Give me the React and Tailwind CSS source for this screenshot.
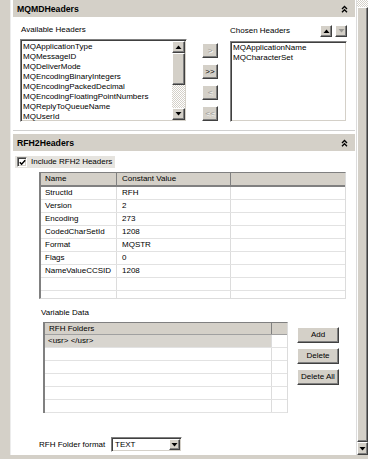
import React from "react";

const raised =
  "bg-[#d4d0c8] border border-t-white border-l-white border-r-[#404040] border-b-[#404040] shadow-[inset_-1px_-1px_0_#808080]";
const sunken =
  "bg-white border border-t-[#808080] border-l-[#808080] border-r-white border-b-white shadow-[inset_1px_1px_0_#404040,inset_-1px_-1px_0_#d4d0c8]";
const checker =
  "bg-[repeating-conic-gradient(#d4d0c8_0%_25%,#ffffff_0%_50%)] bg-[length:2px_2px]";

function Chevrons() {
  return (
    <svg width="7" height="8" viewBox="0 0 7 8">
      <polyline points="1,4 3.5,1.5 6,4" fill="none" stroke="#000" strokeWidth="1.3" />
      <polyline points="1,7.2 3.5,4.7 6,7.2" fill="none" stroke="#000" strokeWidth="1.3" />
    </svg>
  );
}

function Tri({ up, color = "#000" }) {
  return (
    <svg width="7" height="4" viewBox="0 0 7 4">
      <polygon points={up ? "0.5,4 3.5,0.5 6.5,4" : "0.5,0 3.5,3.5 6.5,0"} fill={color} />
    </svg>
  );
}

function SectionHeader({ title }) {
  return (
    <div className="h-[17px] bg-[#d4d0c8] flex items-center justify-between pl-[4px] pr-[7px]">
      <span className="text-[8.7px] font-bold text-black leading-[10px] whitespace-nowrap">{title}</span>
      <Chevrons />
    </div>
  );
}

function Btn({ children, disabled, className = "" }) {
  return (
    <div
      className={`${raised} flex items-center justify-center text-[8px] leading-[10px] whitespace-nowrap ${
        disabled ? "text-[#9a9894] [text-shadow:1px_1px_0_#ffffff]" : "text-black"
      } ${className}`}
    >
      {children}
    </div>
  );
}

const available = [
  "MQApplicationType",
  "MQMessageID",
  "MQDeliverMode",
  "MQEncodingBinaryIntegers",
  "MQEncodingPackedDecimal",
  "MQEncodingFloatingPointNumbers",
  "MQReplyToQueueName",
  "MQUserId",
];

const rows = [
  ["StructId", "RFH"],
  ["Version", "2"],
  ["Encoding", "273"],
  ["CodedCharSetId", "1208"],
  ["Format", "MQSTR"],
  ["Flags", "0"],
  ["NameValueCCSID", "1208"],
  ["", ""],
  ["", ""],
];

function MqmdBody() {
  return (
    <div className="h-[114px] border-b border-b-[#d0d0d0] flex items-start">
      <div className="ml-[7px] w-[167px] mt-[8px]">
        <div className="h-[10px] leading-[10px] text-[8px] pl-[1px] whitespace-nowrap">Available Headers</div>
        <div className={`${sunken} mt-[4px] h-[83px] flex p-[1px] overflow-hidden`}>
          <div className="flex-1 pl-[1px] pt-[1px]">
            {available.map((a) => (
              <div key={a} className="h-[10px] leading-[10px] text-[8px] whitespace-nowrap">
                {a}
              </div>
            ))}
          </div>
          <div className="w-[13px] flex flex-col">
            <div className={`${raised} h-[12px] flex items-center justify-center`}>
              <Tri up />
            </div>
            <div className={`${raised} h-[32px]`} />
            <div className={`${checker} flex-1`} />
            <div className={`${raised} h-[12px] flex items-center justify-center`}>
              <Tri />
            </div>
          </div>
        </div>
      </div>
      <div className="ml-[15px] w-[16px] mt-[26px] flex flex-col gap-[6px]">
        <Btn disabled className="h-[15px]">&gt;</Btn>
        <Btn className="h-[15px]">&gt;&gt;</Btn>
        <Btn disabled className="h-[15px]">&lt;</Btn>
        <Btn disabled className="h-[15px]">&lt;&lt;</Btn>
      </div>
      <div className="ml-[12px] w-[117px] mt-[8px]">
        <div className="h-[12px] flex items-center">
          <span className="text-[8px] leading-[10px] flex-1 whitespace-nowrap">Chosen Headers</span>
          <div className={`${raised} w-[12px] h-[12px] flex items-center justify-center`}>
            <Tri up />
          </div>
          <div className={`${raised} w-[12px] h-[12px] ml-[3px] flex items-center justify-center`}>
            <Tri color="#9a9894" />
          </div>
        </div>
        <div className={`${sunken} mt-[4px] h-[81px] pl-[2px] pt-[1px]`}>
          <div className="h-[10px] leading-[10px] text-[8px] whitespace-nowrap">MQApplicationName</div>
          <div className="h-[10px] leading-[10px] text-[8px] whitespace-nowrap">MQCharacterSet</div>
        </div>
      </div>
    </div>
  );
}

function RfhBody() {
  return (
    <div className="flex-1 flex flex-col">
      <div className="ml-[2px] mt-[5px] w-[100px] h-[12px] bg-[#e6e4df] flex items-center">
        <div className={`${sunken} ml-[2px] w-[10px] h-[10px] shrink-0 flex items-center justify-center`}>
          <svg width="7" height="7" viewBox="0 0 7 7">
            <polyline points="0.8,3.2 2.6,5.2 6.2,1.2" fill="none" stroke="#000" strokeWidth="1.5" />
          </svg>
        </div>
        <span className="ml-[4px] text-[8px] leading-[10px] whitespace-nowrap">Include RFH2 Headers</span>
      </div>

      <div className="ml-[26px] mt-[4px] w-[307px] h-[127px] overflow-hidden border-t border-t-[#808080] border-l-2 border-l-[#808080] border-r border-r-[#dcdcdc] border-b border-b-[#dcdcdc]">
        <div className="flex h-[14px] bg-[#d4d0c8] border-b-2 border-b-[#808080] text-[8px] leading-[10px]">
          <div className="w-[76px] pl-[4px] flex items-center border-r border-r-[#808080]">Name</div>
          <div className="w-[114px] pl-[5px] flex items-center border-r border-r-[#808080] whitespace-nowrap">Constant Value</div>
          <div className="flex-1" />
        </div>
        {rows.map((r, i) => (
          <div key={i} className="flex h-[13px] border-b border-b-[#e2e2e2] text-[8px] leading-[10px]">
            <div className="w-[76px] pl-[4px] flex items-center border-r border-r-[#dcdcdc] whitespace-nowrap">{r[0]}</div>
            <div className="w-[114px] pl-[5px] flex items-center border-r border-r-[#dcdcdc]">{r[1]}</div>
            <div className="flex-1" />
          </div>
        ))}
      </div>

      <div className="ml-[28px] mt-[9px] h-[10px] leading-[10px] text-[8px] whitespace-nowrap">Variable Data</div>

      <div className="flex items-start mt-[4px]">
        <div className="ml-[30px] w-[245px] h-[91px] overflow-hidden border-t border-t-[#808080] border-l-2 border-l-[#808080] border-r border-r-[#dcdcdc]">
          <div className="flex h-[12px] bg-[#d4d0c8] border-b border-b-[#a0a0a0] text-[8px] leading-[10px]">
            <div className="w-[227px] pl-[4px] flex items-center border-r border-r-[#808080]">RFH Folders</div>
            <div className="flex-1" />
          </div>
          {[0, 1, 2, 3, 4, 5].map((i) => (
            <div key={i} className="flex h-[13px] border-b border-b-[#e2e2e2] text-[8px] leading-[10px]">
              <div
                className={`w-[227px] pl-[3px] flex items-center border-r border-r-[#dcdcdc] whitespace-nowrap ${
                  i === 0 ? "bg-[#d8d5cf]" : ""
                }`}
              >
                {i === 0 ? "<usr> </usr>" : ""}
              </div>
              <div className="flex-1" />
            </div>
          ))}
        </div>
        <div className="ml-[9px] w-[42px] mt-[5px] flex flex-col gap-[5px]">
          <Btn className="h-[16px]">Add</Btn>
          <Btn className="h-[16px]">Delete</Btn>
          <Btn className="h-[16px]">Delete All</Btn>
        </div>
      </div>

      <div className="flex items-center ml-[26px] mt-[24px]">
        <span className="w-[72px] text-[8px] leading-[10px] whitespace-nowrap">RFH Folder format</span>
        <div className={`${sunken} w-[71px] h-[15px] flex items-center p-[1px]`}>
          <span className="flex-1 pl-[2px] text-[8px] leading-[10px]">TEXT</span>
          <div className={`${raised} w-[11px] h-full flex items-center justify-center`}>
            <Tri />
          </div>
        </div>
      </div>
    </div>
  );
}

export default function App() {
  return (
    <div className="w-[368px] h-[459px] overflow-hidden flex flex-col bg-[#d4d0c8] font-['Liberation_Sans',Arial,sans-serif] text-black">
      <div className="h-[455px] flex">
        <div className="w-[10px] bg-[#d4d0c8]" />
        <div className="w-[347px] bg-white pl-[2px] pr-[1px] border-l border-l-[#ececec] border-r border-r-[#dcdcdc] flex flex-col">
          <SectionHeader title="MQMDHeaders" />
          <MqmdBody />
          <div className="h-[3px]" />
          <SectionHeader title="RFH2Headers" />
          <RfhBody />
        </div>
        <div className="flex-1 flex flex-col">
          <div className={`${checker} h-[7px]`} />
          <div className={`${raised} flex-1`} />
          <div className={`${raised} h-[13px] flex items-center justify-center`}>
            <Tri />
          </div>
        </div>
      </div>
      <div className="h-[4px] bg-[#d4d0c8]" />
    </div>
  );
}
